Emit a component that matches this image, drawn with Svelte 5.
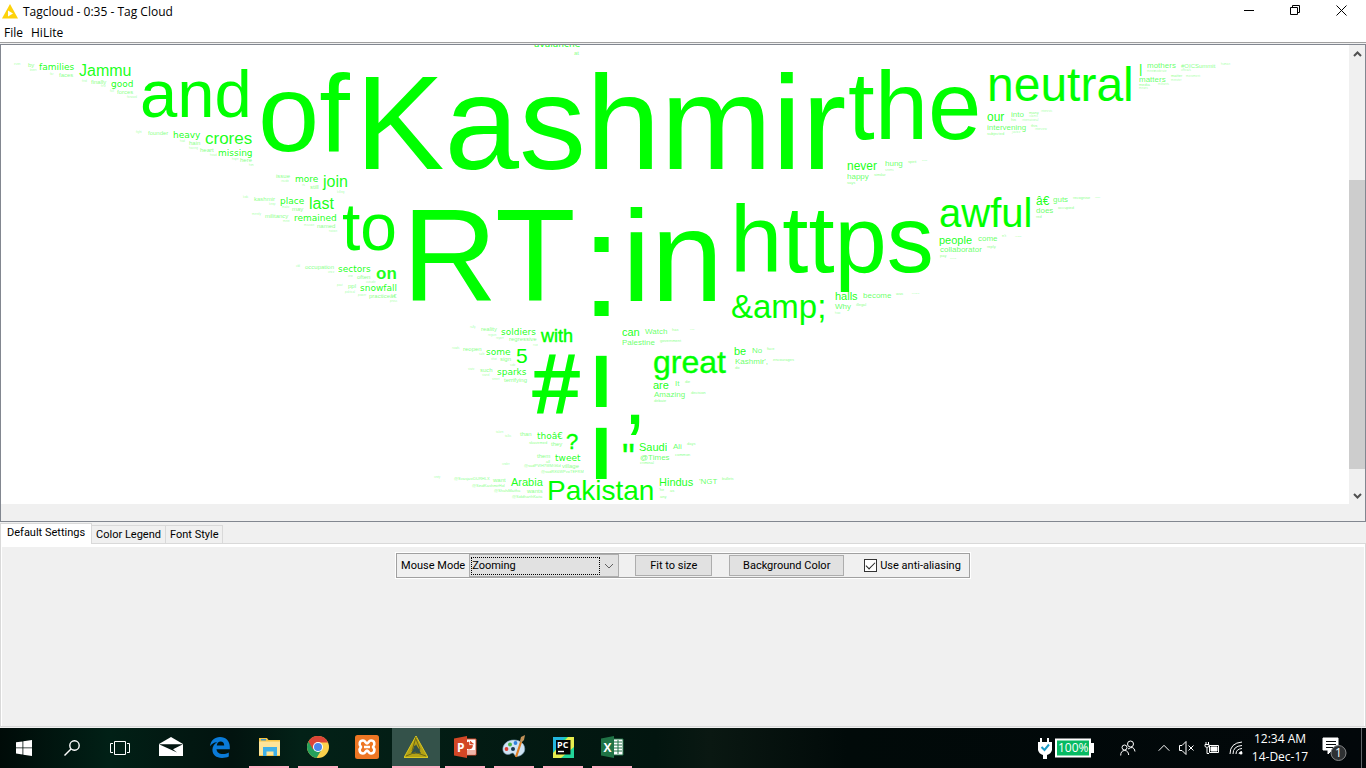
<script>
  // Each word: text, x, baseline, font size, optional style name
  const words = [
    ['Kashmir', 355, 169, 134], ['of', 258, 151, 110], ['and', 140, 117, 67], ['the', 848, 139, 96],
    ['RT', 402, 301, 132], ['in', 622, 301, 130], [':', 581, 316, 148], ['https', 730, 272, 94],
    ['to', 342, 250, 66], ['neutral', 987, 101, 48], ['awful', 939, 227, 40], ['&amp;', 731, 318, 33],
    ['great', 653, 373, 32, 'heavy'], [',', 623, 424, 86], ['I', 591, 407, 74, 'bold'], ['I', 591, 479, 74, 'bold'],
    ['#', 533, 413, 83, 'thick'], ['"', 622, 470, 36, 'heavy'], ['?', 566, 449, 22, 'heavy'], ['5', 516, 363, 21],
    ['with', 541, 342, 18, 'heavy'], ['on', 376, 279, 17, 'bold'], ['Pakistan', 547, 500, 28],
    ['Jammu', 79, 76, 16], ['crores', 205, 144, 17], ['join', 323, 187, 16], ['last', 309, 209, 16],
    ['never', 847, 170, 12], ['our', 987, 121, 12], ['|', 1139, 73, 13], ['â€', 1036, 205, 12],
    ['people', 939, 244, 11], ['halls', 835, 300, 11], ['can', 622, 336, 11], ['be', 734, 355, 11],
    ['are', 653, 389, 11], ['Saudi', 639, 451, 11], ['Arabia', 511, 486, 11], ['Hindus', 659, 486, 11],
    ['families', 39, 70, 9, 'wide'], ['good', 111, 87, 9, 'wide'], ['heavy', 173, 138, 9, 'wide'],
    ['missing', 218, 156, 9, 'wide'], ['more', 295, 182, 9, 'wide'], ['place', 280, 204, 9, 'wide'],
    ['remained', 294, 221, 9, 'wide'], ['sectors', 338, 272, 9, 'wide'], ['snowfall', 360, 291, 9, 'wide'],
    ['soldiers', 501, 335, 9, 'wide'], ['some', 486, 355, 9, 'wide'], ['sparks', 497, 375, 9, 'wide'],
    ['thoâ€', 537, 439, 9, 'wide'], ['tweet', 555, 461, 9, 'wide'], ['avalanche', 534, 47, 9, 'wide'],
    ['mothers', 1147, 68, 8], ['#OICSummit', 1181, 68, 6], ['matters', 1139, 82, 8],
    ['intervening', 987, 130, 8], ['into', 1011, 117, 8], ['hung', 885, 166, 8], ['happy', 847, 179, 8],
    ['guts', 1053, 202, 8], ['does', 1036, 213, 8], ['come', 978, 241, 8], ['collaborator', 940, 252, 8],
    ['become', 863, 298, 8], ['Why', 835, 309, 8], ['Watch', 645, 334, 8], ['Palestine', 622, 345, 8],
    ['No', 752, 353, 8], ["Kashmir',", 735, 364, 8], ['It', 675, 386, 8], ['Amazing', 654, 397, 8],
    ['Ali', 673, 449, 8], ['@Times', 640, 460, 8], ["'NGT", 699, 484, 8],
    ['by', 28, 67, 6], ['faces', 59, 77, 6], ['finally', 91, 84, 6], ['forces', 117, 94, 6],
    ['founder', 148, 135, 6], ['hain', 189, 145, 6], ['heart', 200, 152, 6], ['here', 240, 162, 6],
    ['issue', 276, 178, 6], ['still', 310, 189, 6], ['kashmir', 254, 201, 6], ['may', 292, 211, 6],
    ['militancy', 265, 218, 6], ['named', 317, 228, 6], ['occupation', 305, 269, 6], ['often', 357, 279, 6],
    ['ppl', 348, 288, 6], ['practiceâ€', 369, 298, 6], ['reality', 481, 331, 6], ['regressive', 509, 341, 6],
    ['reopen', 463, 351, 6], ['sign', 500, 361, 6], ['such', 480, 372, 6], ['terrifying', 504, 382, 6],
    ['than', 520, 436, 6], ['they', 551, 446, 6], ['them', 537, 458, 6], ['village', 562, 468, 6],
    ['want', 493, 482, 6], ['wants', 527, 493, 6], ['at', 574, 55, 6],
    ['even', 14, 65, 3], ['been', 30, 71, 3], ['far', 50, 75, 3], ['find', 82, 82, 3],
    ['first', 101, 87, 3], ['full', 110, 92, 3], ['forward', 127, 98, 3], ['fight', 136, 133, 3],
    ['had', 180, 142, 3], ['having', 189, 149, 3], ['head', 210, 156, 3], ['hope', 232, 160, 3], ['him', 249, 166, 3],
    ['inside', 281, 182, 3], ['its', 302, 186, 3], ['killing', 337, 193, 3], ['kids', 243, 198, 3],
    ['keep', 269, 205, 3], ['make', 282, 208, 3], ['merely', 252, 215, 3], ['meet', 283, 222, 3],
    ['mission', 304, 226, 3], ['nation', 329, 232, 3], ['old', 296, 267, 3], ['once', 328, 273, 3],
    ['one', 348, 277, 3], ['outside', 366, 283, 3], ['past', 337, 286, 3], ['political', 345, 293, 3],
    ['power', 358, 296, 3], ['press', 390, 302, 3], ['rally', 470, 328, 3], ['region', 488, 336, 3],
    ['report', 496, 339, 3], ['rise', 533, 346, 3], ['roads', 452, 349, 3], ['safe', 479, 355, 3],
    ['shot', 491, 360, 3], ['side', 510, 366, 3], ['state', 468, 370, 3], ['stand', 482, 376, 3],
    ['street', 492, 380, 3], ['taken', 496, 433, 3], ['talks', 505, 437, 3],
    ['skavirmed', 529, 444, 4], ['all', 546, 463, 4], ['@sadPVIH7WMG6d', 524, 467, 4],
    ['@sadRK6WPvoTEFRM', 541, 473, 4], ['@SvasjastDURHLX', 454, 480, 4], ['@SindKashmirHol', 472, 487, 4],
    ['@ShahiMaitha', 494, 492, 4], ['@SiddharthKaita', 512, 498, 4], ['unity', 434, 478, 3], ['under', 502, 465, 3],
    ['human', 1221, 65, 3], ['meets', 1147, 72, 3], ['moderate', 1154, 72, 3],
    ['officials', 1181, 71, 3], ['matter', 1171, 77, 4], ['movement', 1186, 77, 3], ['minister', 1171, 81, 3],
    ['media', 1139, 86, 4], ['militants', 1158, 85, 3], ['means', 1139, 89, 3], ['many', 1029, 114, 4],
    ['interests', 1041, 112, 3], ['islamic', 1029, 117, 3], ['international', 1022, 121, 3], ['his', 1011, 121, 4],
    ['this', 1031, 127, 4], ['interview', 1035, 130, 3], ['subjected', 987, 135, 4], ['justice', 1012, 133, 3],
    ['spirit', 908, 163, 4], ['similar', 874, 176, 4], ['seems', 885, 171, 3], ['says', 847, 184, 4], ['house', 922, 161, 2],
    ['recognise', 1073, 199, 4], ['occupied', 1058, 209, 4], ['red', 1036, 218, 4], ['rights', 1095, 198, 2],
    ["n't", 1002, 237, 4], ['reply', 987, 248, 4], ['religion', 1015, 237, 2], ['pay', 940, 257, 4], ['protest', 950, 259, 2],
    ['was', 896, 295, 4], ['illegal', 856, 306, 4], ['how', 835, 314, 3], ['because', 912, 294, 2], ['has', 672, 331, 4],
    ['government', 660, 342, 4], ['close', 690, 330, 2], ['face', 767, 350, 4], ['encourages', 773, 361, 4], ['do', 735, 369, 4],
    ['die', 685, 383, 4], ['decision', 691, 394, 4], ['debate', 654, 402, 4], ['days', 687, 445, 4], ['common', 675, 456, 4],
    ['criminal', 640, 464, 4], ['bullets', 722, 480, 4], ["'he", 659, 491, 4], ['as', 670, 492, 4], ['any', 660, 498, 4]
  ];

  const faint = (size) => (size >= 18 ? 1 : size >= 9 ? 0.9 : size >= 8 ? 0.62 : size >= 6 ? 0.5 : size >= 4 ? 0.5 : 0.4);

  const tabs = ['Default Settings', 'Color Legend', 'Font Style'];
  let active = $state(0);
  let mode = $state('Zooming');
  let smooth = $state(true);

  const apps = [
    { id: 'mail', label: 'Mail' },
    { id: 'edge', label: 'Edge' },
    { id: 'files', label: 'File Explorer', open: true },
    { id: 'chrome', label: 'Chrome', open: true },
    { id: 'xampp', label: 'XAMPP' },
    { id: 'knime', label: 'KNIME', open: true, current: true },
    { id: 'ppt', label: 'PowerPoint', open: true },
    { id: 'paint', label: 'Paint', open: true },
    { id: 'pycharm', label: 'PyCharm', open: true },
    { id: 'excel', label: 'Excel', open: true }
  ];
</script>

<div class="desktop">
  <header class="titlebar">
    <svg class="logo" width="16" height="16" viewBox="0 0 16 16"><path d="M8 0 16 14.500H0Z" fill="#fdd20a" /><path d="M6 6.500v6l5-3z" fill="#fff" /></svg>
    <h1>Tagcloud - 0:35 - Tag Cloud</h1>
    <div class="winbtns">
      <button aria-label="Minimize"><svg width="11" height="11"><path d="M0 5.500h10" /></svg></button>
      <button aria-label="Restore"><svg width="11" height="11"><path d="M.5 2.500h7v7h-7zM2.500 2.500v-2h7v7h-2" /></svg></button>
      <button aria-label="Close"><svg width="11" height="11"><path d="M.5.5l10 10M10.500.5l-10 10" /></svg></button>
    </div>
  </header>
  <nav class="menubar"><button>File</button><button>HiLite</button></nav>

  <main class="view">
    <div class="scroller">
      <svg class="cloud" viewBox="1 45 1348 459" preserveAspectRatio="xMinYMin meet">
        {#each words as [text, x, y, size, style]}
          <text class={style} {x} {y} font-size={size} fill-opacity={faint(size)}>{text}</text>
        {/each}
      </svg>
      <div class="scrollbar">
        <button aria-label="Scroll up"><svg width="9" height="6"><path d="M1 5l3.500-3.500L8 5" /></svg></button>
        <div class="track"><div class="thumb"></div></div>
        <button aria-label="Scroll down"><svg width="9" height="6"><path d="M1 1l3.500 3.500L8 1" /></svg></button>
      </div>
    </div>
  </main>

  <section class="settings">
    <div class="tabs" role="tablist">
      {#each tabs as tab, i}
        <button role="tab" aria-selected={active === i} class:active={active === i} onclick={() => (active = i)}>{tab}</button>
      {/each}
    </div>
    <div class="pane">
      <div class="body">
        <form class="tools" onsubmit={(e) => e.preventDefault()}>
          <label for="mode">Mouse Mode</label>
          <div class="combo">
            <select id="mode" bind:value={mode}><option>Zooming</option><option>Selection</option></select>
            <svg width="10" height="6"><path d="M1 1l4 4 4-4" /></svg>
          </div>
          <button class="push fit" type="button">Fit to size</button>
          <button class="push bg" type="button">Background Color</button>
          <label class="check"><input type="checkbox" bind:checked={smooth} />Use anti-aliasing</label>
        </form>
      </div>
    </div>
  </section>

  <footer class="taskbar">
    <button class="sys" aria-label="Start"><svg width="16" height="16" viewBox="0 0 16 16" fill="#fff"><path d="M0 2.300 6.500 1.400v6.100H0zM7.300 1.300 16 0v7.500H7.300zM0 8.300h6.500v6.200L0 13.600zM7.300 8.300H16V16l-8.700-1.300z" /></svg></button>
    <button class="sys" aria-label="Search"><svg width="16" height="16" viewBox="0 0 16 16" fill="none" stroke="#fff" stroke-width="1.400"><circle cx="10.500" cy="5.500" r="4.700" /><path d="M7 9 .5 15.500" /></svg></button>
    <button class="sys" aria-label="Task view"><svg width="20" height="16" viewBox="0 0 20 16" fill="none" stroke="#fff"><path d="M4.500 1.500h11v13h-11zM3 3.500H.5v9H3M17 3.500h2.500v9H17" /></svg></button>
    <div class="apps">
      {#each apps as app}
        <button class="app" class:open={app.open} class:current={app.current} aria-label={app.label}>
          <svg width="24" height="24" viewBox="0 0 24 24">
            {#if app.id === 'mail'}
              <path d="M0 9 12 2l12 7v12H0z" fill="#fff" /><path d="M0 9.200h24L14 14.200l4 3.300L0 9.200z" fill="#021510" />
            {:else if app.id === 'edge'}
              <path d="M2 11.200C2.800 5.500 6.500 2 12 2c6 0 9.800 4.200 9.800 9.800v2.400H8.500c.2 3.200 3 4.800 6.200 4.800 2.300 0 4.200-.6 6.100-1.600v4.200c-2 1-4.200 1.400-6.800 1.400C8.200 23 4.400 19.800 4.400 14.800c0-3.200 1.900-6 4.900-7.500C5.700 7.400 3.500 9.100 2 11.200zM8.800 10.500h7.400c0-2.500-1.400-4-3.600-4-2 0-3.500 1.600-3.800 4z" fill="#0a7bd9" fill-rule="evenodd" />
            {:else if app.id === 'files'}
              <path d="M2 3h8l1.500 2H23v16H2z" fill="#f6c445" /><path d="M4 4h5v1.500H4z" fill="#3f97cf" /><path d="M2 6.500h21V20H2z" fill="#fde499" /><path d="M6 12h14v9h-3.500v-4.500h-7V21H6z" fill="#3eb0e8" />
            {:else if app.id === 'chrome'}
              <circle cx="12" cy="12" r="11" fill="#fbd04b" /><path d="M12 12 2.500 6.500A11 11 0 0 0 10.500 22.900L16 14z" fill="#25a05b" /><path d="M2.500 6.500A11 11 0 0 1 22 7.500H12l-5 7z" fill="#dc4437" /><circle cx="12" cy="12" r="5" fill="#fff" /><circle cx="12" cy="12" r="4" fill="#4a86ec" />
            {:else if app.id === 'xampp'}
              <rect width="24" height="24" rx="2.500" fill="#ee7623" /><path d="M8 5.500c-3.500 0-4.500 4-2 6.500-2.500 2.500-1.500 6.500 2 6.500 2.500 0 2.500-3 4-3s1.500 3 4 3c3.500 0 4.500-4 2-6.500 2.500-2.500 1.500-6.500-2-6.500-2.500 0-2.500 3-4 3s-1.500-3-4-3zM9 12h6" fill="none" stroke="#fff" stroke-width="2.600" stroke-linejoin="round" />
            {:else if app.id === 'knime'}
              <path d="M12 5 20.500 20.500h-17z" fill="none" stroke="#b5a214" stroke-width="4" /><path d="M12 1 24 22.500H0z" fill="none" stroke="#d9c61f" /><path d="m9.500 10 7 5-7 4z" fill="#34524a" /><path d="M12 2 8 16m4-12 4 10M2 21l10-4M22 21l-9-3" fill="none" stroke="#6f6a14" />
            {:else if app.id === 'ppt'}
              <path d="M12 4h11v16H12z" fill="#fff" stroke="#d24726" /><path d="M16 7a3.500 3.500 0 1 0 3.500 3.500H16zM17.500 6v3h3.200M14 16h8M14 18h8" fill="#d24726" stroke="#d24726" stroke-width=".8" /><path d="M1 3.500 14 1v22L1 20.500z" fill="#d24726" /><text x="4" y="16.500" class="letter" font-size="12">P</text>
            {:else if app.id === 'paint'}
              <path d="M12 5C5 5 0 10 1 15.500 2 20 7 20 9 18.500c2-1 3 0 3.500 1.500 1 2.500 8 1.500 10-4C24 9 18 5 12 5z" fill="#cfe3f3" stroke="#7d9fba" stroke-width=".6" /><circle cx="4.500" cy="14" r="1.900" fill="#dd3d31" /><circle cx="8" cy="9.500" r="2" fill="#48b548" /><circle cx="13.500" cy="8" r="1.900" fill="#3181dd" /><circle cx="11" cy="14" r="2" fill="#163651" /><path d="m14 22 5-15" stroke="#df7e24" stroke-width="2.200" /><path d="m18 6 1-4 4-2-1 5-2.500 2.500z" fill="#c29259" />
            {:else if app.id === 'pycharm'}
              <path d="M2 2h21v21H2z" fill="#22d69a" /><path d="M2 2h12L4 14l-2 4z" fill="#23b7df" /><path d="M23 2v10L10 23H2v-5L17 2z" fill="#e7ed4f" /><path d="M5 5h14.500v14.500H5z" fill="#050505" /><text x="6" y="13" class="letter" font-size="9">PC</text><path d="M7 16.500h6" stroke="#fff" stroke-width="1.400" />
            {:else}
              <path d="M12 4h11v16H12z" fill="#fff" stroke="#207346" /><path d="M14 7h8M14 10h8M14 13h8M14 16h8M18 5v14" stroke="#207346" /><path d="M1 3.500 14 1v22L1 20.500z" fill="#207346" /><text x="3.500" y="16.500" class="letter" font-size="12">X</text>
            {/if}
          </svg>
        </button>
      {/each}
    </div>
    <div class="tray">
      <svg width="58" height="24" viewBox="0 0 58 24">
        <path d="M3 2v4M10 2v4" stroke="#fff" stroke-width="2" /><path d="M0 6h14v8q-1 4-5 5v4H5v-4q-4-1-5-5z" fill="#fff" /><path d="m3.500 11 3 3L11 8.500" fill="none" stroke="#1c9cc7" stroke-width="2" />
        <path d="M18 3.500h34v17H18z" fill="#06ba62" stroke="#fff" stroke-width="2" /><path d="M53 7h3v10h-3z" fill="#fff" /><text x="20" y="16" class="pct">100%</text>
      </svg>
      <svg class="people" width="16" height="16" viewBox="0 0 16 16"><circle cx="10.500" cy="4" r="3" /><circle cx="4.500" cy="7.500" r="2.500" /><path d="M.7 15.500q0-5 4-5 3.500 0 4 4.500M8 9q6-4 7 2.500" /></svg>
      <svg class="chev" width="12" height="8" viewBox="0 0 12 8"><path d="m.7 6.700 5.300-5.400 5.300 5.400" /></svg>
      <svg width="16" height="14" viewBox="0 0 16 14"><path d="M.5 4.500H3l4-4v13l-4-4H.5zM9.500 4.500l5 5M14.500 4.500l-5 5" /></svg>
      <svg width="16" height="14" viewBox="0 0 16 14"><path d="M5.500 4.500h9v7h-9zM3 7v5.500h2M1 3.500h4v2q-2 2-4 0zM2 1v2M4.500 1v2" /><path d="M7 6h6v4H7z" fill="#fff" /></svg>
      <svg width="14" height="14" viewBox="0 0 14 14"><path d="M1 13Q1 2 13 1M4 13q0-8 9-8.500M7 13q0-5 6-5.500M10 13q0-2 3-2.500" /><circle cx="12" cy="12" r="1.500" fill="#fff" stroke="none" /></svg>
      <div class="clock"><time>12:34 AM</time><span>14-Dec-17</span></div>
      <svg class="note" width="26" height="26" viewBox="0 0 26 26"><path d="M1 3h15v12h-6l-4 4v-4H1z" fill="#fff" stroke="#fff" /><path d="M4 6.500h10M4 9.500h10M4 12.500h7" stroke="#06090b" /><circle cx="16.500" cy="18" r="7.500" fill="#2e3133" stroke="#858789" /><text x="13" y="22" class="count">1</text></svg>
      <div class="peek"></div>
    </div>
  </footer>
</div>

<style>
  :global(body) { background: #f0f0f0; }
  .desktop { min-height: 100vh; display: flex; flex-direction: column; font-family: Roboto, "Open Sans", sans-serif; font-size: 11px; color: #000; background: #f0f0f0; }
  button { border: 0; padding: 0; background: none; font: inherit; color: inherit; }
  svg { display: block; }
  .titlebar { display: flex; align-items: center; height: 24px; background: #fff; padding: 0 2px; }
  .titlebar h1 { margin: 0 0 2px 5px; font: 12px "Open Sans", sans-serif; flex: 1; }
  .winbtns { display: flex; margin-bottom: 3px; }
  .winbtns button { width: 46px; height: 20px; display: grid; place-items: center; }
  .winbtns svg { fill: none; stroke: #000; }
  .menubar { display: flex; gap: 8px; height: 18px; padding-left: 4px; background: #fff; border-bottom: 1px solid #a0a0a0; font: 12px/18px "Open Sans", sans-serif; }
  .view { margin-top: 1px; border: 1px solid #828790; padding-bottom: 17px; }
  .scroller { display: flex; background: #fff; }
  .cloud { flex: 1; min-width: 0; }
  .cloud text { fill: #0f0; font-family: "Liberation Sans", Arial, sans-serif; }
  .cloud .bold { font-weight: 700; }
  .cloud .heavy { stroke: #0f0; stroke-width: .4px; }
  .cloud .thick { stroke: #0f0; stroke-width: 2px; }
  .cloud .wide { font-family: "DejaVu Sans", sans-serif; }
  .scrollbar { width: 16px; display: flex; flex-direction: column; background: #f0f0f0; }
  .scrollbar button { height: 17px; display: grid; place-items: center; }
  .scrollbar svg { fill: none; stroke: #505050; stroke-width: 2; }
  .track { flex: 1; display: flex; flex-direction: column; padding: 118px 0 18px; }
  .thumb { flex: 1; background: #cdcdcd; }
  .settings { flex: 1; display: flex; flex-direction: column; }
  .tabs { display: flex; align-items: flex-end; height: 21px; font-size: 11px; }
  .tabs button { height: 18px; padding: 0 4px; border: 1px solid #d9d9d9; border-left: 0; border-bottom: 0; line-height: 18px; }
  .tabs .active { height: 21px; margin-bottom: -1px; padding: 0 6px 2px; background: #fff; border-left: 1px solid #d9d9d9; position: relative; line-height: 18px; }
  .pane { flex: 1; display: flex; border: 1px solid #d9d9d9; background: #fff; padding: 3px 1px 0; margin-bottom: 1px; }
  .body { flex: 1; background: #f0f0f0; padding-top: 6px; display: flex; justify-content: center; align-items: flex-start; }
  .tools { display: flex; align-items: center; height: 23px; border: 1px solid #a0a0a0; box-shadow: 0 0 0 1px #fff; padding: 0 8px 0 4px; font-size: 11px; white-space: nowrap; }
  .combo { display: flex; align-items: center; margin: 0 16px 0 4px; width: 148px; height: 21px; border: 1px solid #adadad; background: #e1e1e1; }
  .combo select { appearance: none; flex: 1; height: 18px; margin-left: 1px; padding: 0; border: 1px dotted #000; border-radius: 0; background: #e1e1e1; font: inherit; color: #000; }
  .combo svg { margin: 0 4px; fill: none; stroke: #606060; }
  .push { height: 21px; border: 1px solid #adadad; background: #e1e1e1; }
  .fit { width: 77px; margin-right: 17px; }
  .bg { width: 115px; margin-right: 20px; }
  .check { display: flex; align-items: center; gap: 3px; }
  .check input { appearance: none; margin: 0; width: 13px; height: 13px; border: 1px solid #333; background: #fff; display: grid; place-items: center; }
  .check input:checked::before { content: ""; width: 8px; height: 4px; border: solid #222; border-width: 0 0 1px 1px; transform: translateY(-1px) rotate(-45deg); }
  .taskbar { height: 40px; display: flex; background: linear-gradient(90deg, #000b08, #012016 8%, #021711 14%, #02130f 17%, #032117 22%, #02150f 48%, #0a1812 52%, #010a09 62%, #02070a); color: #fff; }
  .taskbar button { width: 48px; display: grid; place-items: center; }
  .apps { display: flex; gap: 1px; margin-left: 3px; }
  .app { border: solid transparent; border-width: 0 4px 2px; background-clip: padding-box; box-sizing: border-box; }
  .taskbar .open { background-image: linear-gradient(#ffaec3, #ffaec3); background-repeat: no-repeat; background-size: 40px 2px; background-position: bottom; background-origin: border-box; background-clip: border-box; }
  .taskbar .current { background-color: #34524a; background-size: 48px 2px; }
  .letter { font-family: "Open Sans", sans-serif; font-weight: 700; fill: #fff; }
  .tray { margin-left: auto; display: flex; align-items: center; gap: 9px; padding-right: 4px; }
  .tray > svg { fill: none; stroke: #fff; stroke-width: 1; }
  .tray > svg:first-child, .tray > .note { stroke: none; }
  .tray .people { margin: 0 13px 0 15px; }
  .tray .pct { font: 12px "Open Sans", sans-serif; fill: #fff; stroke: none; }
  .clock { display: flex; flex-direction: column; align-items: center; width: 60px; margin: 0 3px 0 -2px; font: 12px/18px "Open Sans", sans-serif; white-space: nowrap; }
  .tray .count { font: 12px "Open Sans", sans-serif; fill: #fff; stroke: none; }
  .peek { align-self: stretch; margin-left: 4px; border-left: 1px solid #60666a; }
</style>
